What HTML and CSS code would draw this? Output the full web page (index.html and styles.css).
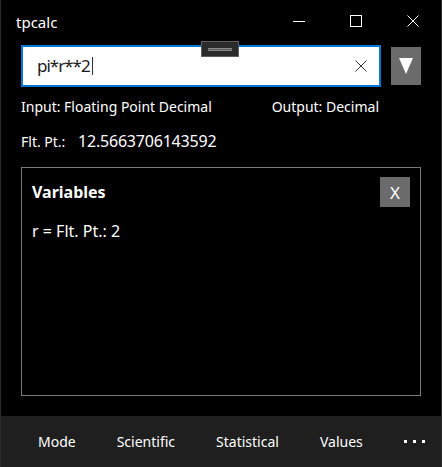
FILE: index.html
```html
<!DOCTYPE html>
<html>
<head>
<meta charset="utf-8">
<link rel="stylesheet" href="styles.css">
</head>
<body>
<div class="window">
  <div class="titlebar">
    <span class="title">tpcalc</span>
    <div class="caption-buttons">
      <span class="cap-btn"><svg width="12" height="12" viewBox="0 0 12 12"><path d="M0 6.5h12" stroke="#fff" stroke-width="1"/></svg></span>
      <span class="cap-btn"><svg width="12" height="12" viewBox="0 0 12 12"><rect x="0.5" y="0.5" width="11" height="11" fill="none" stroke="#fff" stroke-width="1"/></svg></span>
      <span class="cap-btn"><svg width="12" height="12" viewBox="0 0 12 12"><path d="M0.5 0.5L11.5 11.5M11.5 0.5L0.5 11.5" stroke="#fff" stroke-width="1"/></svg></span>
    </div>
  </div>
  <div class="content">
    <div class="input-row">
      <div class="textbox">
        <span class="expr">pi*r**2</span><span class="caret"></span>
        <span class="clear"><svg width="12" height="12" viewBox="0 0 12 12"><path d="M0.5 0.5L11.5 11.5M11.5 0.5L0.5 11.5" stroke="#333" stroke-width="1"/></svg></span>
      </div>
      <div class="drop-btn"><svg width="14" height="16" viewBox="0 0 14 16"><path d="M0 0H14L7 16Z" fill="#fff"/></svg></div>
      <div class="handle"><span class="handle-bar"></span></div>
    </div>
    <div class="info-row">
      <span>Input: Floating Point Decimal</span>
      <span class="output">Output: Decimal</span>
    </div>
    <div class="result-row">
      <span class="result-label">Flt. Pt.:</span>
      <span class="result-value">12.5663706143592</span>
    </div>
    <div class="panel">
      <div class="panel-header">
        <span class="panel-title">Variables</span>
        <span class="panel-close">X</span>
      </div>
      <div class="var-item">r = Flt. Pt.: 2</div>
    </div>
  </div>
  <div class="appbar">
    <span class="app-item">Mode</span>
    <span class="app-item">Scientific</span>
    <span class="app-item">Statistical</span>
    <span class="app-item">Values</span>
    <span class="more"><i></i><i></i><i></i></span>
  </div>
</div>
</body>
</html>
```
FILE: styles.css
```css
* { box-sizing: border-box; }
html, body {
  margin: 0;
  padding: 0;
  background: #000;
}
body {
  font-family: "Noto Sans", "Open Sans", sans-serif;
  color: #fff;
}
.window {
  width: 442px;
  height: 467px;
  display: flex;
  flex-direction: column;
  background: #000;
  border-left: 1px solid #2b2b2b;
  border-right: 1px solid #2b2b2b;
}
.titlebar {
  height: 40px;
  display: flex;
  align-items: center;
  justify-content: space-between;
  padding-left: 15px;
}
.title {
  font-size: 15px;
  line-height: 20px;
  margin-top: 4px;
}
.caption-buttons {
  display: flex;
  align-self: stretch;
}
.cap-btn {
  width: 57px;
  display: flex;
  align-items: center;
  justify-content: center;
  padding-top: 1px;
}
.content {
  flex: 1;
  padding: 5px 20px 0 20px;
  display: flex;
  flex-direction: column;
}
.input-row {
  position: relative;
  display: flex;
  align-items: center;
  gap: 10px;
  height: 42px;
}
.textbox {
  width: 360px;
  height: 42px;
  border: 2px solid #0078d7;
  background: #fff;
  display: flex;
  align-items: center;
  padding-left: 14px;
  padding-right: 12px;
  color: #1a1a1a;
}
.expr {
  font-size: 17px;
  line-height: 24px;
  letter-spacing: -1px;
}
.caret {
  width: 1px;
  height: 18px;
  background: #333;
  margin-left: 2px;
}
.clear {
  margin-left: auto;
  display: flex;
}
.drop-btn {
  width: 30px;
  height: 38px;
  background: #6b6b6b;
  display: flex;
  align-items: center;
  justify-content: center;
}
.handle {
  position: absolute;
  left: 180px;
  top: -4px;
  width: 38px;
  height: 16px;
  background: #2b2b2b;
  border: 1px solid #5e5e5e;
  display: flex;
  align-items: center;
  justify-content: center;
}
.handle-bar {
  width: 24px;
  height: 3px;
  border-top: 1px solid #8a8a8a;
  border-bottom: 1px solid #8a8a8a;
  background: #5a5a5a;
}
.info-row {
  margin-top: 10px;
  display: flex;
  font-size: 14px;
  line-height: 20px;
}
.output {
  margin-left: auto;
  margin-right: 42px;
}
.result-row {
  margin-top: 13px;
  display: flex;
  align-items: baseline;
  line-height: 22px;
}
.result-label {
  font-size: 14px;
  width: 57px;
}
.result-value {
  font-size: 16px;
  letter-spacing: -0.2px;
}
.panel {
  margin-top: 14px;
  width: 400px;
  height: 229px;
  border: 1px solid #7a7a7a;
  padding: 9px 10px 0 10px;
}
.panel-header {
  display: flex;
  align-items: center;
  justify-content: space-between;
}
.panel-title {
  font-size: 16px;
  font-weight: 700;
}
.panel-close {
  width: 30px;
  height: 30px;
  background: #6b6b6b;
  display: flex;
  align-items: center;
  justify-content: center;
  font-size: 17px;
}
.var-item {
  margin-top: 13px;
  font-size: 16px;
  line-height: 22px;
}
.appbar {
  height: 51px;
  background: #1f1f1f;
  display: flex;
  align-items: center;
  padding-left: 37px;
  gap: 41px;
  font-size: 14px;
}
.more {
  margin-left: auto;
  margin-right: 20px;
  display: flex;
  gap: 6px;
}
.more i {
  width: 3px;
  height: 3px;
  background: #fff;
  display: block;
}
```
